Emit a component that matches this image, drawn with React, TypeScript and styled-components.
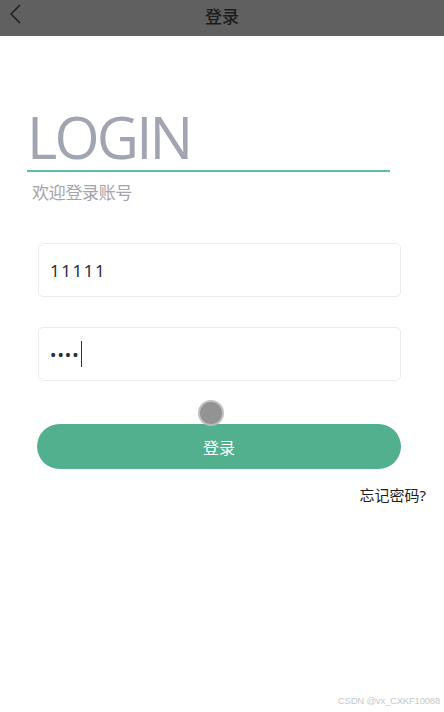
import styled, {createGlobalStyle} from 'styled-components';

const GlobalStyle = createGlobalStyle`
  body {
    margin: 0;
    background: #fff;
    font-family: "Noto Sans", "Noto Sans CJK SC", sans-serif;
  }
`;

const Page = styled.div`
  position: relative;
  width: 444px;
  height: 712px;
  background: #fff;
  overflow: hidden;
`;

const NavBar = styled.div`
  height: 36px;
  background: #606060;
  display: flex;
  align-items: center;
  justify-content: center;
  position: relative;
`;

const BackBtn = styled.div`
  position: absolute;
  left: 8px;
  top: 4px;
  width: 16px;
  height: 20px;
`;

const NavTitle = styled.div`
  color: #1c1c1c;
  font-size: 17px;
  font-weight: 500;
  margin-top: -6px;
`;

const Heading = styled.div`
  margin: 70px 0 0 27px;
  width: 363px;
  border-bottom: 2px solid #5cbf98;
`;

const BigTitle = styled.div`
  font-family: "Open Sans", "Noto Sans", sans-serif;
  font-size: 58px;
  line-height: 62px;
  color: #a2a5b1;
  letter-spacing: -2.8px;
  padding-bottom: 2px;
`;

const SubTitle = styled.div`
  margin: 7px 0 0 32px;
  font-size: 17px;
  color: #a4a4ac;
  letter-spacing: -0.3px;
`;

const Form = styled.div`
  margin: 39px 43px 0 38px;
  display: flex;
  flex-direction: column;
  gap: 30px;
`;

const Field = styled.div<{$caret?: boolean}>`
  height: 54px;
  box-sizing: border-box;
  border: 1px solid #ececec;
  border-radius: 5px;
  padding: 0 11px;
  display: flex;
  align-items: center;
  font-size: 17px;
  color: #2a2f3a;
  letter-spacing: ${p => (p.$caret ? '1px' : '1.5px')};
`;

const Caret = styled.span`
  display: inline-block;
  width: 1px;
  height: 26px;
  background: #333;
  margin-left: 1px;
`;

const ButtonArea = styled.div`
  position: relative;
  margin: 43px 43px 0 37px;
`;

const LoginButton = styled.button`
  width: 100%;
  height: 45px;
  border: none;
  border-radius: 23px;
  background: #52b08f;
  color: #fff;
  font-family: "Noto Sans CJK SC", sans-serif;
  font-size: 16px;
  padding: 0;
`;

const TouchDot = styled.div`
  position: absolute;
  left: 161px;
  top: -24px;
  width: 22px;
  height: 22px;
  border-radius: 50%;
  background: #8e8e8e;
  border: 2px solid #bdbdbd;
  opacity: 0.95;
`;

const Forgot = styled.div`
  text-align: right;
  margin: 15px 18px 0 0;
  font-size: 15px;
  color: #1e1e1e;
`;

const Watermark = styled.div`
  position: absolute;
  right: 4px;
  bottom: 6px;
  font-family: "Liberation Sans", sans-serif;
  font-size: 9.5px;
  letter-spacing: -0.2px;
  color: #c8c8c8;
`;

export default function App() {
  return (
    <>
      <GlobalStyle />
      <Page>
        <NavBar>
          <BackBtn>
            <svg width="16" height="20" viewBox="0 0 16 20">
              <path d="M12 1 L3 10 L12 19" fill="none" stroke="#1a1a1a" strokeWidth="1.4" />
            </svg>
          </BackBtn>
          <NavTitle>登录</NavTitle>
        </NavBar>
        <Heading>
          <BigTitle>LOGIN</BigTitle>
        </Heading>
        <SubTitle>欢迎登录账号</SubTitle>
        <Form>
          <Field>11111</Field>
          <Field $caret>
            ••••<Caret />
          </Field>
        </Form>
        <ButtonArea>
          <TouchDot />
          <LoginButton>登录</LoginButton>
        </ButtonArea>
        <Forgot>忘记密码?</Forgot>
        <Watermark>CSDN @vx_CXKF10088</Watermark>
      </Page>
    </>
  );
}
